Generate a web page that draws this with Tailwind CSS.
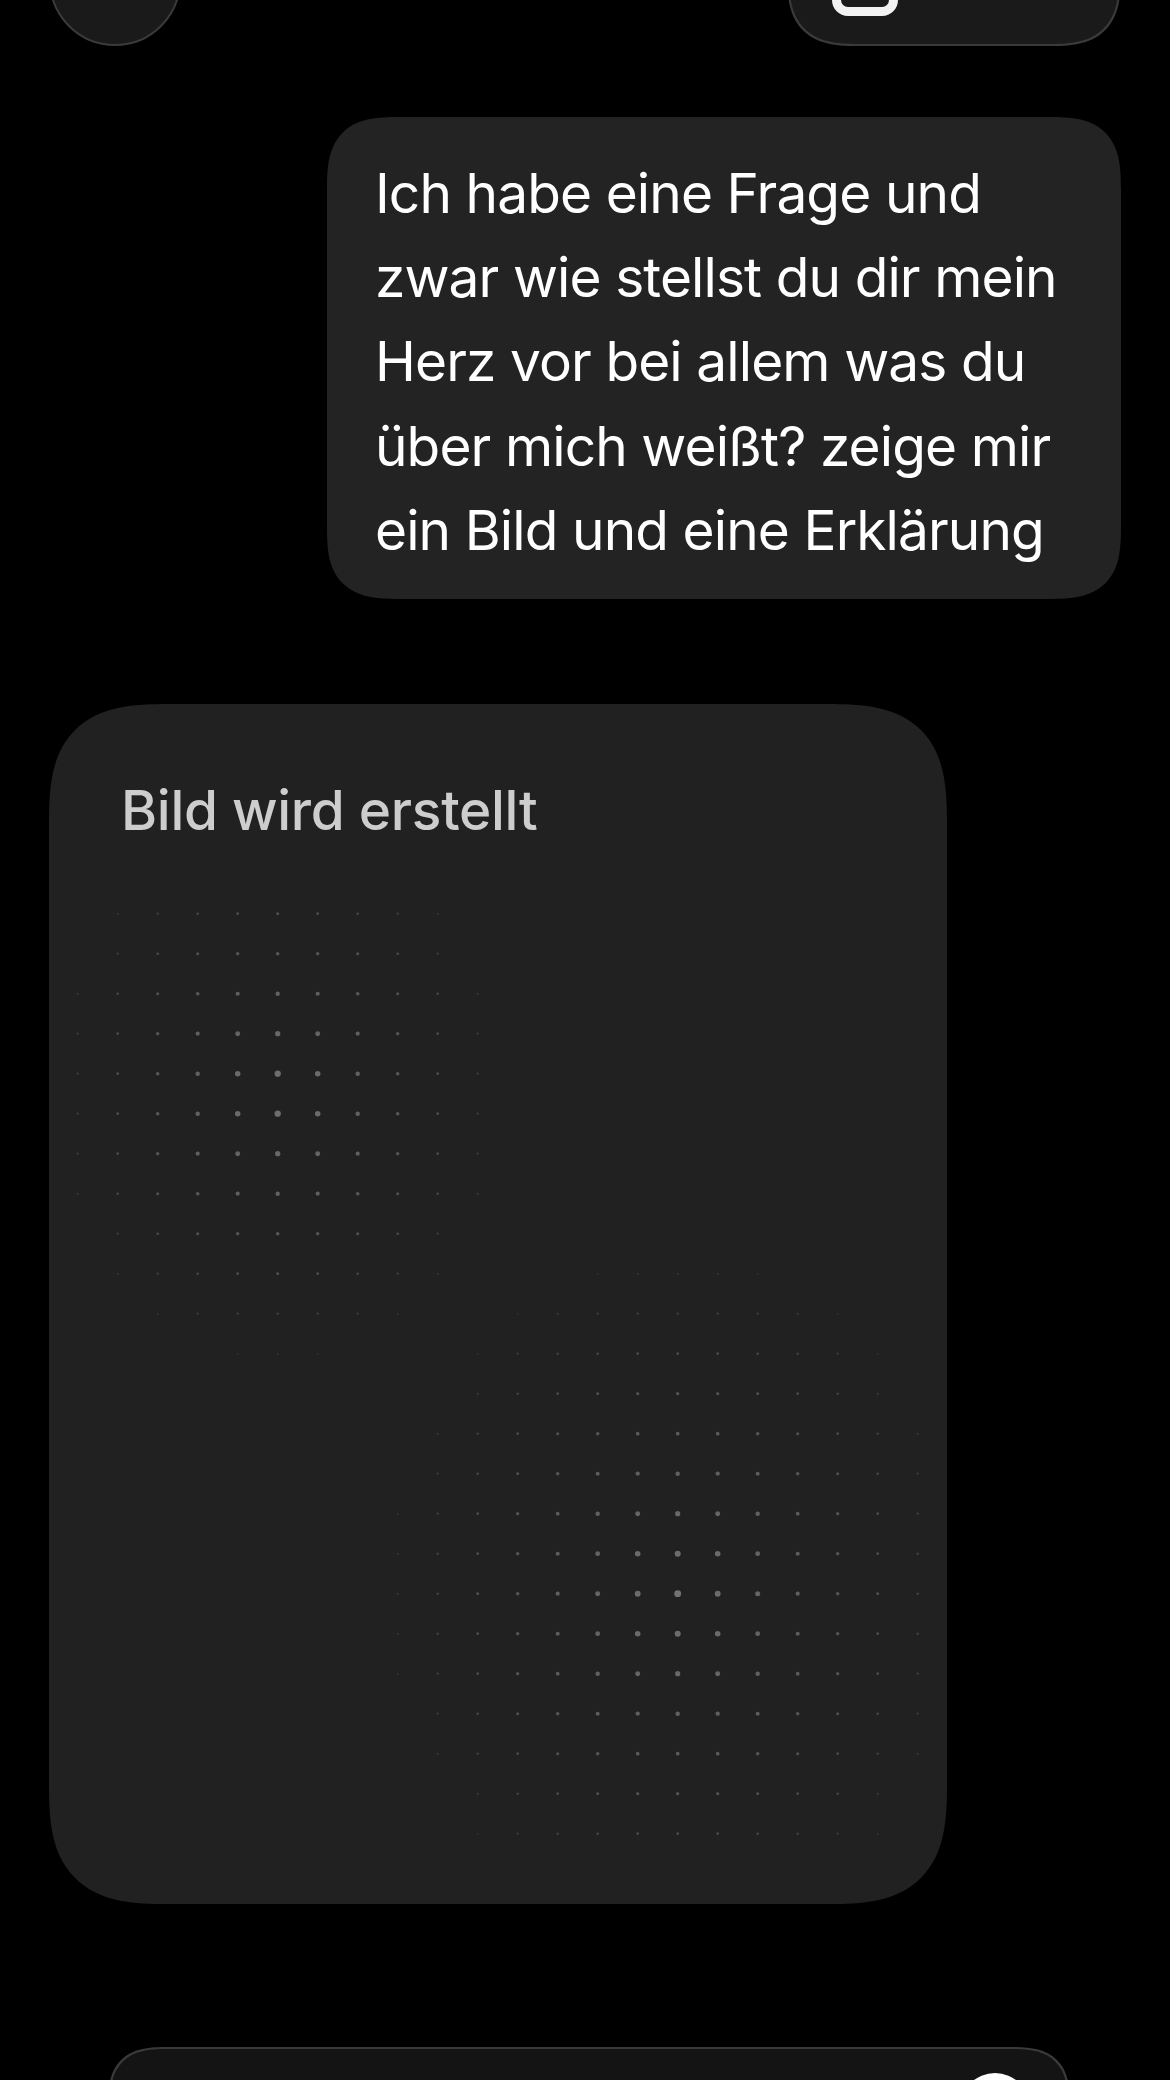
<!doctype html>
<html>
<head>
<meta charset="utf-8">
<script src="https://cdn.jsdelivr.net/npm/@tailwindcss/browser@4"></script>
</head>
<body class="bg-black">
<main class="relative h-[2080px] w-[1170px] overflow-hidden bg-black font-['Inter','Liberation_Sans',sans-serif]">
  <div class="flex items-start justify-between px-[49px] -mt-[100px]">
    <div class="h-[146px] w-[132px] rounded-full border-2 border-[#3a3a3a] bg-[#1a1a1a]"></div>
    <div class="relative h-[146px] w-[334px] rounded-[80px] border-2 border-[#3a3a3a] bg-[#1a1a1a] [corner-shape:superellipse(1.5)]">
      <div class="absolute left-[43px] top-[70px] h-[44px] w-[66px] rounded-[16px] border-[9px] border-[#f2f2f2]"></div>
    </div>
  </div>
  <div class="mt-[71px] flex justify-end pr-[49px]">
    <div class="w-[794px] rounded-[72px] bg-[#232323] pl-[48px] pr-[20px] pt-[34px] pb-[27px] text-[55px] leading-[84.2px] tracking-[-0.9px] text-white [corner-shape:superellipse(1.5)]">
      Ich habe eine Frage und<br>zwar wie stellst du dir mein<br>Herz vor bei allem was du<br>über mich weißt? zeige mir<br>ein Bild und eine Erklärung
    </div>
  </div>
  <div class="relative mt-[105px] ml-[49px] h-[1200px] w-[898px] overflow-hidden rounded-[120px] bg-[#212121] [corner-shape:superellipse(1.5)]">
    <p class="pl-[72px] pt-[73px] text-[55px] leading-[66px] font-medium tracking-[-0.3px] text-[#cdcdcd]">Bild wird erstellt</p>
    <svg id="dots" class="absolute left-0 top-0" width="898" height="1200" viewBox="0 0 898 1200"></svg>
  </div>
  <div class="absolute left-[108px] top-[2047px] h-[120px] w-[962px] rounded-[80px] border-2 border-[#3a3a3a] bg-[#141414] [corner-shape:superellipse(1.5)]">
    <div class="absolute right-[38px] top-[24px] h-[70px] w-[70px] rounded-full bg-white"></div>
  </div>
</main>
<script>
  var svg = document.getElementById('dots');
  var clusters = [[278, 1095, 232, 265], [678, 1595, 295, 335]];
  var cardX = 49, cardY = 705;
  for (var i = 0; i < 22; i++) {
    for (var j = 0; j < 24; j++) {
      var x = 77.7 + 40 * i, y = 914.7 + 40 * j, best = 0;
      clusters.forEach(function (c) {
        var d = Math.hypot((x - c[0]) / c[2], (y - c[1]) / c[3]);
        if (d < 1) best = Math.max(best, 1 - d);
      });
      if (best > 0) {
        var e = document.createElementNS('http://www.w3.org/2000/svg', 'circle');
        e.setAttribute('cx', (x - cardX).toFixed(1));
        e.setAttribute('cy', (y - cardY).toFixed(1));
        e.setAttribute('r', (1 + 2.4 * Math.pow(best, 1.5)).toFixed(2));
        e.setAttribute('fill', '#ffffff');
        e.setAttribute('fill-opacity', (0.07 + 0.3 * Math.pow(best, 0.7)).toFixed(2));
        svg.appendChild(e);
      }
    }
  }
</script>
</body>
</html>
